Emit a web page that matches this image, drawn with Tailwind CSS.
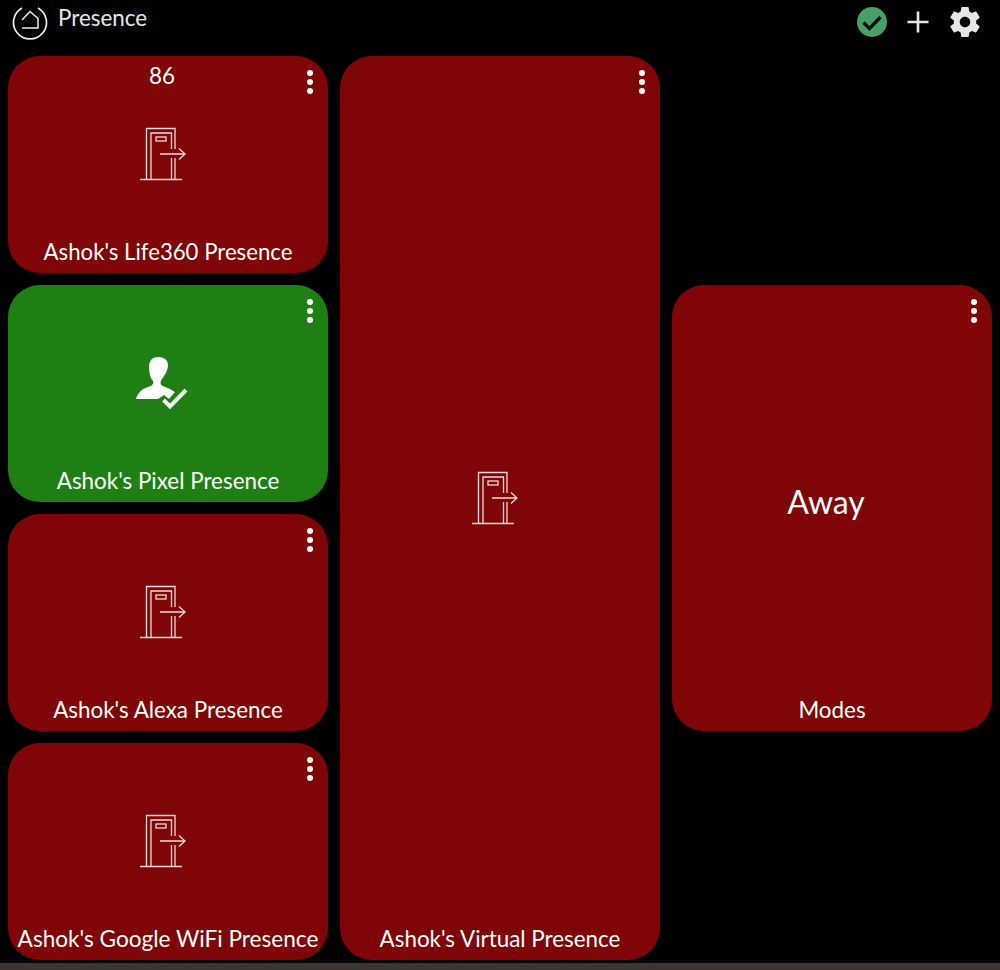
<!DOCTYPE html>
<html lang="en">
<head>
  <meta charset="UTF-8" />
  <title>Presence</title>
  <script src="https://cdn.jsdelivr.net/npm/@tailwindcss/browser@4"></script>
</head>
<body class="bg-black h-[970px] overflow-hidden relative font-['Lato',sans-serif] text-white">
  <svg class="hidden">
    <defs>
      <symbol id="door" viewBox="0 0 70 70">
        <g fill="none" stroke="#efdcdc" stroke-width="1.3">
          <path d="M10 59.500H52" />
          <path d="M16.500 59V8.500H45V29" />
          <path d="M45 38V59" />
          <path d="M21 59V13H41.500V29" />
          <path d="M41.500 38V59" />
          <rect x="26" y="17" width="10" height="4" />
          <path d="M30 34H55M49 28.500L55 34L49 39.500" />
        </g>
      </symbol>
      <symbol id="dots" viewBox="0 0 8 28">
        <circle cx="4" cy="4" r="3" fill="#fff" />
        <circle cx="4" cy="13" r="3" fill="#fff" />
        <circle cx="4" cy="22" r="3" fill="#fff" />
      </symbol>
    </defs>
  </svg>

  <!-- header -->
  <header class="h-14 flex items-start pl-3 pr-[17px]">
    <svg class="w-[36px] h-[36px] mt-[4px]" viewBox="0 0 36 36" fill="none" stroke="#ececec">
      <path stroke-width="1.700" d="M10 4A16.500 16.500 0 1 0 26 4" />
      <path stroke-width="1.500" d="M10 16L18 7.500L26 14.500V24H10" />
    </svg>
    <span class="ml-[10px] mt-[4px] text-[22.4px] leading-[28px] text-[#e8e8e8]">Presence</span>
    <div class="ml-auto flex items-center mt-[4px]">
      <svg class="w-[30px] h-[30px] mr-[19px]" viewBox="0 0 30 30">
        <circle cx="15" cy="15" r="15" fill="#46a06c" />
        <path d="M6.500 15.500L12.500 21.500L23.500 10" fill="none" stroke="#0d0d0d" stroke-width="3.400" />
      </svg>
      <svg class="w-[24px] h-[24px] mr-[17px]" viewBox="0 0 24 24">
        <path d="M12 1.500V22.500M1.500 12H22.500" stroke="#e6e6e6" stroke-width="2.600" fill="none" />
      </svg>
      <svg class="w-[36px] h-[36px]" viewBox="0 0 24 24">
        <path fill="#e6e6e6" d="M19.43 12.98c.04-.32.07-.64.07-.98s-.03-.66-.07-.98l2.11-1.65c.19-.15.24-.42.12-.64l-2-3.46c-.12-.22-.39-.3-.61-.22l-2.49 1c-.52-.4-1.08-.73-1.69-.98l-.38-2.65C14.46 2.18 14.25 2 14 2h-4c-.25 0-.46.18-.49.42l-.38 2.65c-.61.25-1.17.59-1.69.98l-2.49-1c-.23-.09-.49 0-.61.22l-2 3.46c-.13.22-.07.49.12.64l2.11 1.65c-.04.32-.07.65-.07.98s.03.66.07.98l-2.11 1.65c-.19.15-.24.42-.12.64l2 3.46c.12.22.39.3.61.22l2.49-1c.52.4 1.08.73 1.69.98l.38 2.65c.03.24.24.42.49.42h4c.25 0 .46-.18.49-.42l.38-2.65c.61-.25 1.17-.59 1.69-.98l2.49 1c.23.09.49 0 .61-.22l2-3.46c.12-.22.07-.49-.12-.64l-2.11-1.65zM12 15.500c-1.93 0-3.500-1.57-3.500-3.500s1.57-3.500 3.500-3.500 3.500 1.57 3.500 3.500-1.57 3.500-3.500 3.500z" />
      </svg>
    </div>
  </header>

  <!-- tiles -->
  <main class="grid grid-cols-[repeat(3,320px)] auto-rows-[217px] gap-3 pl-2">
    <div class="relative rounded-[32px] bg-[#800506]">
      <span class="absolute top-[6px] left-0 w-[308px] text-center text-[22.4px] leading-[28px]">86</span>
      <svg class="absolute top-[13px] right-[14px] w-[8px] h-[28px]"><use href="#dots" /></svg>
      <svg class="absolute left-[122px] top-[64px] w-[70px] h-[70px]"><use href="#door" /></svg>
      <span class="absolute bottom-[7px] left-0 w-[320px] text-center text-[22.2px] leading-[28px]">Ashok's Life360 Presence</span>
    </div>

    <div class="relative rounded-[32px] bg-[#800506] row-span-4">
      <svg class="absolute top-[13px] right-[14px] w-[8px] h-[28px]"><use href="#dots" /></svg>
      <svg class="absolute left-[122px] top-[408px] w-[70px] h-[70px]"><use href="#door" /></svg>
      <span class="absolute bottom-[7px] left-0 w-[320px] text-center text-[22.4px] leading-[28px]">Ashok's Virtual Presence</span>
    </div>

    <div class="relative rounded-[32px] bg-[#800506] row-start-2 row-span-2 col-start-3">
      <svg class="absolute top-[13px] right-[14px] w-[8px] h-[28px]"><use href="#dots" /></svg>
      <span class="absolute top-[197px] left-0 w-[308px] text-center text-[32px] leading-[40px]">Away</span>
      <span class="absolute bottom-[7px] left-0 w-[320px] text-center text-[22.4px] leading-[28px]">Modes</span>
    </div>

    <div class="relative rounded-[32px] bg-[#1e7f12] row-start-2 col-start-1">
      <svg class="absolute top-[13px] right-[14px] w-[8px] h-[28px]"><use href="#dots" /></svg>
      <svg class="absolute left-[117px] top-[65px] w-[70px] h-[70px]" viewBox="0 0 70 70">
        <path fill="#fff" d="M33 7C27 7 24 11 24 17C24 24 26 29 28 31C29 34 27 36 23 37C17 39 13 42 11 49H33L39 45L44 49L50 42C46 39 40 37 38 36C35 35 35 32 37 29C40 25 43 20 43 15C43 10 39 7 33 7Z" />
        <path fill="none" stroke="#fff" stroke-width="4" d="M38.500 50L45 56.500L61 40" />
      </svg>
      <span class="absolute bottom-[7px] left-0 w-[320px] text-center text-[22.4px] leading-[28px]">Ashok's Pixel Presence</span>
    </div>

    <div class="relative rounded-[32px] bg-[#800506] row-start-3 col-start-1">
      <svg class="absolute top-[13px] right-[14px] w-[8px] h-[28px]"><use href="#dots" /></svg>
      <svg class="absolute left-[122px] top-[64px] w-[70px] h-[70px]"><use href="#door" /></svg>
      <span class="absolute bottom-[7px] left-0 w-[320px] text-center text-[22.4px] leading-[28px]">Ashok's Alexa Presence</span>
    </div>

    <div class="relative rounded-[32px] bg-[#800506] row-start-4 col-start-1">
      <svg class="absolute top-[13px] right-[14px] w-[8px] h-[28px]"><use href="#dots" /></svg>
      <svg class="absolute left-[122px] top-[64px] w-[70px] h-[70px]"><use href="#door" /></svg>
      <span class="absolute bottom-[7px] left-0 w-[320px] text-center text-[22.6px] leading-[28px]">Ashok's Google WiFi Presence</span>
    </div>
  </main>

  <div class="absolute left-0 right-0 bottom-0 h-[7px] bg-[#3c3532]"></div>
</body>
</html>
